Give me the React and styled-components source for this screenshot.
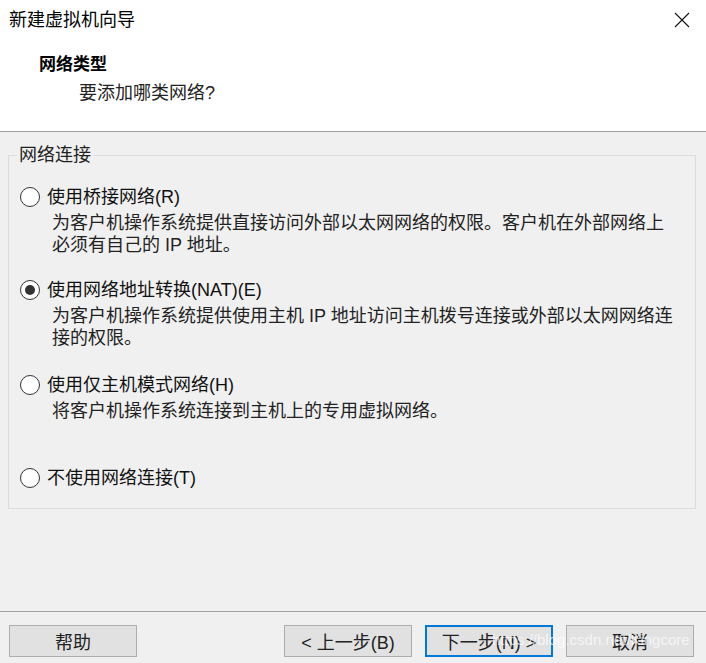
import React from 'react'
import styled, { createGlobalStyle } from 'styled-components'

const GlobalStyle = createGlobalStyle`
  html, body {
    margin: 0;
    padding: 0;
    background: #f0f0f0;
  }
  body {
    font-family: "Liberation Sans", "Noto Sans CJK SC", sans-serif;
    color: #000;
  }
`

const Window = styled.div`
  position: relative;
  width: 706px;
  height: 663px;
  display: flex;
  flex-direction: column;
  background: #f0f0f0;
  overflow: hidden;
`

const Header = styled.div`
  height: 131px;
  background: #fff;
  border-bottom: 1px solid #a0a0a0;
  display: flex;
  flex-direction: column;
`

const TitleBar = styled.div`
  height: 40px;
  display: flex;
  align-items: center;
  justify-content: space-between;
  padding: 0 14px 0 9px;
`

const Title = styled.span`
  font-size: 18px;
  line-height: 22px;
`

const CloseButton = styled.button`
  width: 20px;
  height: 20px;
  padding: 0;
  border: none;
  background: transparent;
  display: flex;
  align-items: center;
  justify-content: center;
`

const Heading = styled.div`
  margin: 14px 0 0 39px;
  font-size: 17px;
  line-height: 22px;
  font-weight: bold;
`

const SubHeading = styled.div`
  margin: 6px 0 0 79px;
  font-size: 18px;
  line-height: 22px;
  color: #222;
`

const Body = styled.div`
  flex: 1;
  display: flex;
  flex-direction: column;
`

const Group = styled.fieldset`
  margin: 13px 10px 0 8px;
  padding: 0 0 19px 11px;
  border: 1px solid #dcdcdc;
  border-radius: 0;
  min-width: 0;
`

const Legend = styled.legend`
  margin-left: -3px;
  padding: 0 2px;
  font-size: 18px;
  line-height: 20px;
  color: #222;
`

const Option = styled.div`
  margin-top: ${p => p.$gap}px;
`

const OptionLabel = styled.label`
  display: flex;
  align-items: center;
  gap: 7px;
  font-size: 18px;
  line-height: 22px;
  color: #111;
`

const Radio = styled.span`
  box-sizing: border-box;
  width: 20px;
  height: 20px;
  border-radius: 50%;
  border: 1px solid #333;
  background: #fff;
  display: flex;
  align-items: center;
  justify-content: center;

  &::after {
    content: '';
    width: 10px;
    height: 10px;
    border-radius: 50%;
    background: #333;
    display: ${p => (p.$checked ? 'block' : 'none')};
  }
`

const Description = styled.div`
  margin: 4px 0 0 32px;
  font-size: 18px;
  line-height: 22px;
  color: #222;
`

const Footer = styled.div`
  box-sizing: border-box;
  margin-top: auto;
  height: 52px;
  border-top: 1px solid #a0a0a0;
  display: flex;
  align-items: flex-start;
  gap: 13px;
  padding: 13px 12px 0 9px;
`

const Button = styled.button`
  box-sizing: border-box;
  width: 128px;
  height: 32px;
  padding: 0;
  background: #e1e1e1;
  border: ${p => (p.$primary ? '2px solid #0078d7' : '1px solid #adadad')};
  font-family: "Liberation Sans", "Noto Sans CJK SC", sans-serif;
  font-size: 18px;
  color: #222;
  margin-left: ${p => (p.$push ? 'auto' : '0')};
`

const Watermark = styled.div`
  position: absolute;
  left: 492px;
  top: 630px;
  font-size: 15px;
  line-height: 20px;
  color: rgba(255, 255, 255, 0.7);
  pointer-events: none;
  white-space: nowrap;
`

const options = [
  {
    label: '使用桥接网络(R)',
    lines: ['为客户机操作系统提供直接访问外部以太网网络的权限。客户机在外部网络上', '必须有自己的 IP 地址。'],
    gap: 21,
  },
  {
    label: '使用网络地址转换(NAT)(E)',
    lines: ['为客户机操作系统提供使用主机 IP 地址访问主机拨号连接或外部以太网网络连', '接的权限。'],
    gap: 23,
    checked: true,
  },
  {
    label: '使用仅主机模式网络(H)',
    lines: ['将客户机操作系统连接到主机上的专用虚拟网络。'],
    gap: 25,
  },
  {
    label: '不使用网络连接(T)',
    lines: [],
    gap: 45,
  },
]

const CloseIcon = () => (
  <svg width="16" height="16" viewBox="0 0 16 16">
    <path d="M1 1L15 15M15 1L1 15" stroke="#111" strokeWidth="1.1" fill="none" />
  </svg>
)

export default function App() {
  return (
    <>
      <GlobalStyle />
      <Window>
        <Header>
          <TitleBar>
            <Title>新建虚拟机向导</Title>
            <CloseButton aria-label="关闭">
              <CloseIcon />
            </CloseButton>
          </TitleBar>
          <Heading>网络类型</Heading>
          <SubHeading>要添加哪类网络?</SubHeading>
        </Header>
        <Body>
          <Group>
            <Legend>网络连接</Legend>
            {options.map(opt => (
              <Option key={opt.label} $gap={opt.gap}>
                <OptionLabel>
                  <Radio $checked={opt.checked} />
                  {opt.label}
                </OptionLabel>
                {opt.lines.length > 0 && (
                  <Description>
                    {opt.lines.map((line, i) => (
                      <div key={i}>{line}</div>
                    ))}
                  </Description>
                )}
              </Option>
            ))}
          </Group>
          <Footer>
            <Button>帮助</Button>
            <Button $push>&lt; 上一步(B)</Button>
            <Button $primary>下一步(N) &gt;</Button>
            <Button>取消</Button>
          </Footer>
        </Body>
        <Watermark>https://blog.csdn.net/Kingcore</Watermark>
      </Window>
    </>
  )
}
